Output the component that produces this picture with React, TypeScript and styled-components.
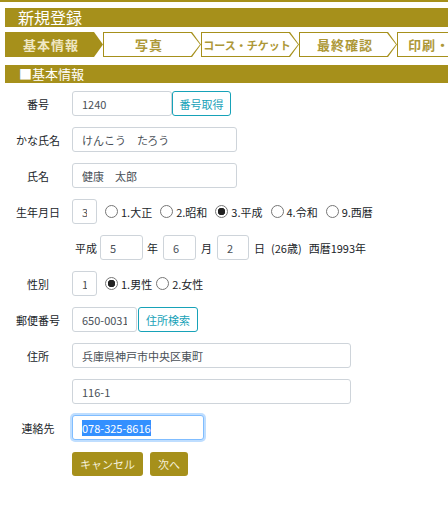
import React, {useEffect, useRef} from 'react';
import styled, {createGlobalStyle} from 'styled-components';

const GOLD = '#a6901b';

const GlobalStyle = createGlobalStyle`
  body {
    margin: 0;
    background: #fff;
    font-family: "Noto Sans CJK JP", "Noto Sans", sans-serif;
    color: #212529;
  }
`;

const Page = styled.div`
  border-top: 2px solid ${GOLD};
  padding-top: 6px;
  padding-left: 5px;
  overflow: hidden;
`;

const TitleBar = styled.div`
  height: 19px;
  background: ${GOLD};
  color: #fff;
  font-size: 16px;
  line-height: 19px;
  padding-left: 13px;
`;

const Steps = styled.div`
  display: flex;
  gap: 1px;
  margin-top: 5px;
  width: 600px;
`;

const Step = styled.div<{$active?: boolean; $small?: boolean}>`
  position: relative;
  flex: 0 0 98px;
  height: 25px;
  display: flex;
  align-items: center;
  justify-content: center;
  padding-right: 6px;
  box-sizing: border-box;
  background: ${GOLD};
  clip-path: polygon(0 0, calc(100% - 9px) 0, 100% 50%, calc(100% - 9px) 100%, 0 100%);
  font-size: ${p => (p.$small ? '11px' : '13px')};
  font-weight: bold;
  letter-spacing: ${p => (p.$small ? '0' : '1px')};
  color: ${p => (p.$active ? '#efe7c4' : '#ad9838')};
  margin-left: ${p => (p.$active ? '0' : '-1px')};

  &::before {
    content: '';
    position: absolute;
    inset: 1px;
    background: ${p => (p.$active ? GOLD : '#fff')};
    clip-path: polygon(0 0, calc(100% - 9px) 0, 100% 50%, calc(100% - 9px) 100%, 0 100%);
  }

  span {
    position: relative;
    white-space: nowrap;
  }
`;

const SectionBar = styled.div`
  margin-top: 8px;
  height: 18px;
  background: ${GOLD};
  color: #fff;
  font-size: 13px;
  line-height: 18px;
  padding-left: 14px;
`;

const Form = styled.div`
  display: grid;
  grid-template-columns: 56px 1fr;
  column-gap: 6px;
  row-gap: 11px;
  margin-top: 8px;
  padding-left: 5px;
  font-size: 11px;
`;

const Label = styled.div`
  height: 25px;
  display: flex;
  align-items: center;
  justify-content: center;
`;

const Line = styled.div`
  height: 25px;
  display: flex;
  align-items: center;
`;

const TextInput = styled.input<{$w: number}>`
  width: ${p => p.$w}px;
  height: 25px;
  box-sizing: border-box;
  border: 1px solid #ced4da;
  border-radius: 3px;
  padding: 0 9px;
  font-family: inherit;
  font-size: 11px;
  color: #495057;
  outline: none;

  &:focus {
    border-color: #80bdff;
    box-shadow: 0 0 0 2px rgba(0, 123, 255, 0.25);
  }

  &::selection {
    background: #3390ff;
    color: #fff;
  }
`;

const OutlineButton = styled.button<{$w: number}>`
  width: ${p => p.$w}px;
  height: 25px;
  box-sizing: border-box;
  border: 1px solid #17a2b8;
  border-radius: 3px;
  background: #fff;
  color: #17a2b8;
  font-family: inherit;
  font-size: 11px;
  padding: 0;
`;

const Radio = styled.label<{$checked?: boolean; $gap?: number}>`
  display: flex;
  align-items: center;
  margin-left: ${p => p.$gap ?? 8}px;
  white-space: nowrap;

  &::before {
    content: '';
    width: 13px;
    height: 13px;
    border-radius: 50%;
    border: 1px solid #767676;
    margin-right: 3px;
    box-sizing: border-box;
    background: ${p => (p.$checked ? 'radial-gradient(circle, #222 0 3.5px, #fff 4px)' : '#fff')};
  }
`;

const Unit = styled.span<{$l?: number; $r?: number}>`
  margin-left: ${p => p.$l ?? 4}px;
  margin-right: ${p => p.$r ?? 4}px;
  white-space: nowrap;
`;

const Actions = styled.div`
  display: flex;
  gap: 7px;
  margin-top: 1px;
`;

const GoldButton = styled.button`
  height: 24px;
  padding: 0 8px;
  border: none;
  border-radius: 3px;
  background: ${GOLD};
  color: #f4efd8;
  font-family: inherit;
  font-size: 11px;
`;

const eras = ['1.大正', '2.昭和', '3.平成', '4.令和', '9.西暦'];

export default function App() {
  const telRef = useRef<HTMLInputElement>(null);

  useEffect(() => {
    telRef.current?.focus();
    telRef.current?.select();
  }, []);

  return (
    <Page>
      <GlobalStyle />
      <TitleBar>新規登録</TitleBar>
      <Steps>
        <Step $active><span>基本情報</span></Step>
        <Step><span>写真</span></Step>
        <Step $small><span>コース・チケット</span></Step>
        <Step><span>最終確認</span></Step>
        <Step><span>印刷・予約</span></Step>
      </Steps>
      <SectionBar>■基本情報</SectionBar>

      <Form>
        <Label>番号</Label>
        <Line>
          <TextInput $w={100} defaultValue="1240" readOnly />
          <OutlineButton $w={59}>番号取得</OutlineButton>
        </Line>

        <Label>かな氏名</Label>
        <Line>
          <TextInput $w={165} defaultValue="けんこう　たろう" readOnly />
        </Line>

        <Label>氏名</Label>
        <Line>
          <TextInput $w={165} defaultValue="健康　太郎" readOnly />
        </Line>

        <Label>生年月日</Label>
        <Line>
          <TextInput $w={25} defaultValue="3" readOnly />
          {eras.map(e => (
            <Radio key={e} $checked={e === '3.平成'}>{e}</Radio>
          ))}
        </Line>

        <div />
        <Line>
          <Unit $l={3} $r={3}>平成</Unit>
          <TextInput $w={43} defaultValue="5" readOnly />
          <Unit $l={4} $r={5}>年</Unit>
          <TextInput $w={33} defaultValue="6" readOnly />
          <Unit $l={5} $r={5}>月</Unit>
          <TextInput $w={32} defaultValue="2" readOnly />
          <Unit $l={5} $r={6}>日</Unit>
          <Unit $l={0} $r={7}>(26歳)</Unit>
          <Unit $l={0}>西暦1993年</Unit>
        </Line>

        <Label>性別</Label>
        <Line>
          <TextInput $w={25} defaultValue="1" readOnly />
          <Radio $checked>1.男性</Radio>
          <Radio $gap={4}>2.女性</Radio>
        </Line>

        <Label>郵便番号</Label>
        <Line>
          <TextInput $w={65} defaultValue="650-0031" readOnly />
          <OutlineButton $w={60} style={{marginLeft: 1}}>住所検索</OutlineButton>
        </Line>

        <Label>住所</Label>
        <Line>
          <TextInput $w={279} defaultValue="兵庫県神戸市中央区東町" readOnly />
        </Line>

        <div />
        <Line>
          <TextInput $w={279} defaultValue="116-1" readOnly />
        </Line>

        <Label>連絡先</Label>
        <Line>
          <TextInput ref={telRef} $w={132} defaultValue="078-325-8616" />
        </Line>

        <div />
        <Actions>
          <GoldButton>キャンセル</GoldButton>
          <GoldButton>次へ</GoldButton>
        </Actions>
      </Form>
    </Page>
  );
}
